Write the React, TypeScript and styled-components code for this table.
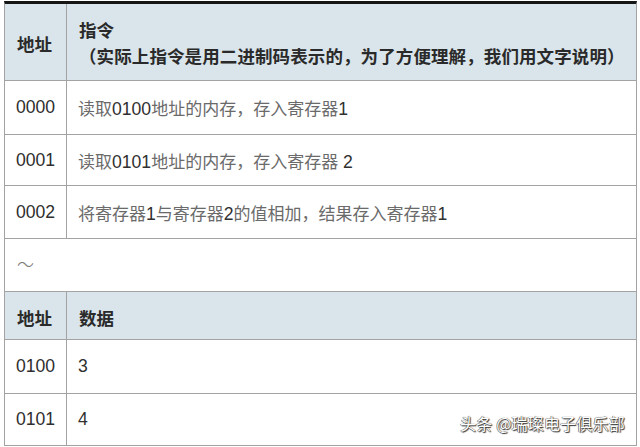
import React from "react";
import styled, { createGlobalStyle } from "styled-components";

const Global = createGlobalStyle`
  html, body { margin: 0; padding: 0; background: #ffffff; }
  body { width: 640px; height: 447px; overflow: hidden; }
`;

const Page = styled.div`
  position: relative;
  width: 640px;
  height: 447px;
  padding: 1px 0 0 4px;
  box-sizing: border-box;
  background: #ffffff;
`;

const Table = styled.div`
  width: 633px;
  box-sizing: border-box;
  border-top: 3px solid #151515;
  border-left: 1px solid #a3a3a3;
  border-right: 1px solid #a3a3a3;
  display: flex;
  flex-direction: column;
`;

const Row = styled.div<{ $h: number; $head?: boolean; $full?: boolean }>`
  display: grid;
  grid-template-columns: ${(p) => (p.$full ? "1fr" : "62px 1fr")};
  height: ${(p) => p.$h}px;
  box-sizing: border-box;
  border-bottom: 1px solid #a3a3a3;
  background: ${(p) => (p.$head ? "#d9e4eb" : "#ffffff")};
`;

const AddrCell = styled.div<{ $head?: boolean }>`
  box-sizing: border-box;
  border-right: 1px solid #a3a3a3;
  display: flex;
  align-items: center;
  padding: ${(p) => (p.$head ? "3px 0 0 12px" : "0 0 0 11px")};
  font-family: ${(p) =>
    p.$head
      ? `"Liberation Serif", "Noto Sans CJK SC", serif`
      : `"Liberation Sans", "Noto Sans CJK SC", sans-serif`};
  font-size: ${(p) => (p.$head ? "17.5px" : "17.6px")};
  font-weight: ${(p) => (p.$head ? 700 : 400)};
  color: ${(p) => (p.$head ? "#2a2a2a" : "#2e2e2e")};
`;

const BodyCell = styled.div<{ $head?: boolean }>`
  display: flex;
  flex-direction: column;
  justify-content: center;
  padding: ${(p) => (p.$head ? "3px 0 0 12px" : "0 0 0 11px")};
  font-family: "Liberation Sans", "Noto Sans CJK SC", sans-serif;
  font-size: ${(p) => (p.$head ? "17.5px" : "17px")};
  font-weight: ${(p) => (p.$head ? 700 : 400)};
  color: ${(p) => (p.$head ? "#2a2a2a" : "#6a6a6a")};
  white-space: nowrap;
`;

const HeadLine = styled.div<{ $spaced?: boolean }>`
  line-height: 26px;
  letter-spacing: ${(p) => (p.$spaced ? "0.1px" : "0")};
`;

const Num = styled.span`
  color: #303030;
  font-size: 17.6px;
`;

const Tilde = styled.div`
  display: flex;
  align-items: center;
  padding: 0 0 4px 12px;
  font-family: "Noto Sans CJK SC", sans-serif;
  font-size: 17px;
  font-weight: 300;
  color: #7a7a7a;
`;

const Watermark = styled.div`
  position: absolute;
  left: 460px;
  top: 411px;
  font-family: "Noto Sans CJK SC", sans-serif;
  font-size: 16px;
  color: #ffffff;
  letter-spacing: 0.2px;
  text-shadow: 1px 1px 1px #2f2f2f, -0.5px -0.5px 0.5px #555, 0 0 1px #444;
  white-space: nowrap;
`;

type Mixed = (string | { n: string })[];

const render = (parts: Mixed) =>
  parts.map((p, i) =>
    typeof p === "string" ? <React.Fragment key={i}>{p}</React.Fragment> : <Num key={i}>{p.n}</Num>
  );

const program: { addr: string; text: Mixed; h: number }[] = [
  { addr: "0000", text: ["读取", { n: "0100" }, "地址的内存，存入寄存器", { n: "1" }], h: 54 },
  { addr: "0001", text: ["读取", { n: "0101" }, "地址的内存，存入寄存器 ", { n: "2" }], h: 51 },
  {
    addr: "0002",
    text: ["将寄存器", { n: "1" }, "与寄存器", { n: "2" }, "的值相加，结果存入寄存器", { n: "1" }],
    h: 53,
  },
];

const data: { addr: string; value: string; h: number }[] = [
  { addr: "0100", value: "3", h: 54 },
  { addr: "0101", value: "4", h: 52 },
];

export default function App() {
  return (
    <Page>
      <Global />
      <Table>
        <Row $h={77} $head>
          <AddrCell $head>地址</AddrCell>
          <BodyCell $head>
            <HeadLine>指令</HeadLine>
            <HeadLine $spaced>（实际上指令是用二进制码表示的，为了方便理解，我们用文字说明）</HeadLine>
          </BodyCell>
        </Row>
        {program.map((r) => (
          <Row key={r.addr} $h={r.h}>
            <AddrCell>{r.addr}</AddrCell>
            <BodyCell>
              <div>{render(r.text)}</div>
            </BodyCell>
          </Row>
        ))}
        <Row $h={53} $full>
          <Tilde>～</Tilde>
        </Row>
        <Row $h={48} $head>
          <AddrCell $head>地址</AddrCell>
          <BodyCell $head>
            <div>数据</div>
          </BodyCell>
        </Row>
        {data.map((r) => (
          <Row key={r.addr} $h={r.h}>
            <AddrCell>{r.addr}</AddrCell>
            <BodyCell>
              <div>
                <Num>{r.value}</Num>
              </div>
            </BodyCell>
          </Row>
        ))}
      </Table>
      <Watermark>头条 @瑞璨电子俱乐部</Watermark>
    </Page>
  );
}
